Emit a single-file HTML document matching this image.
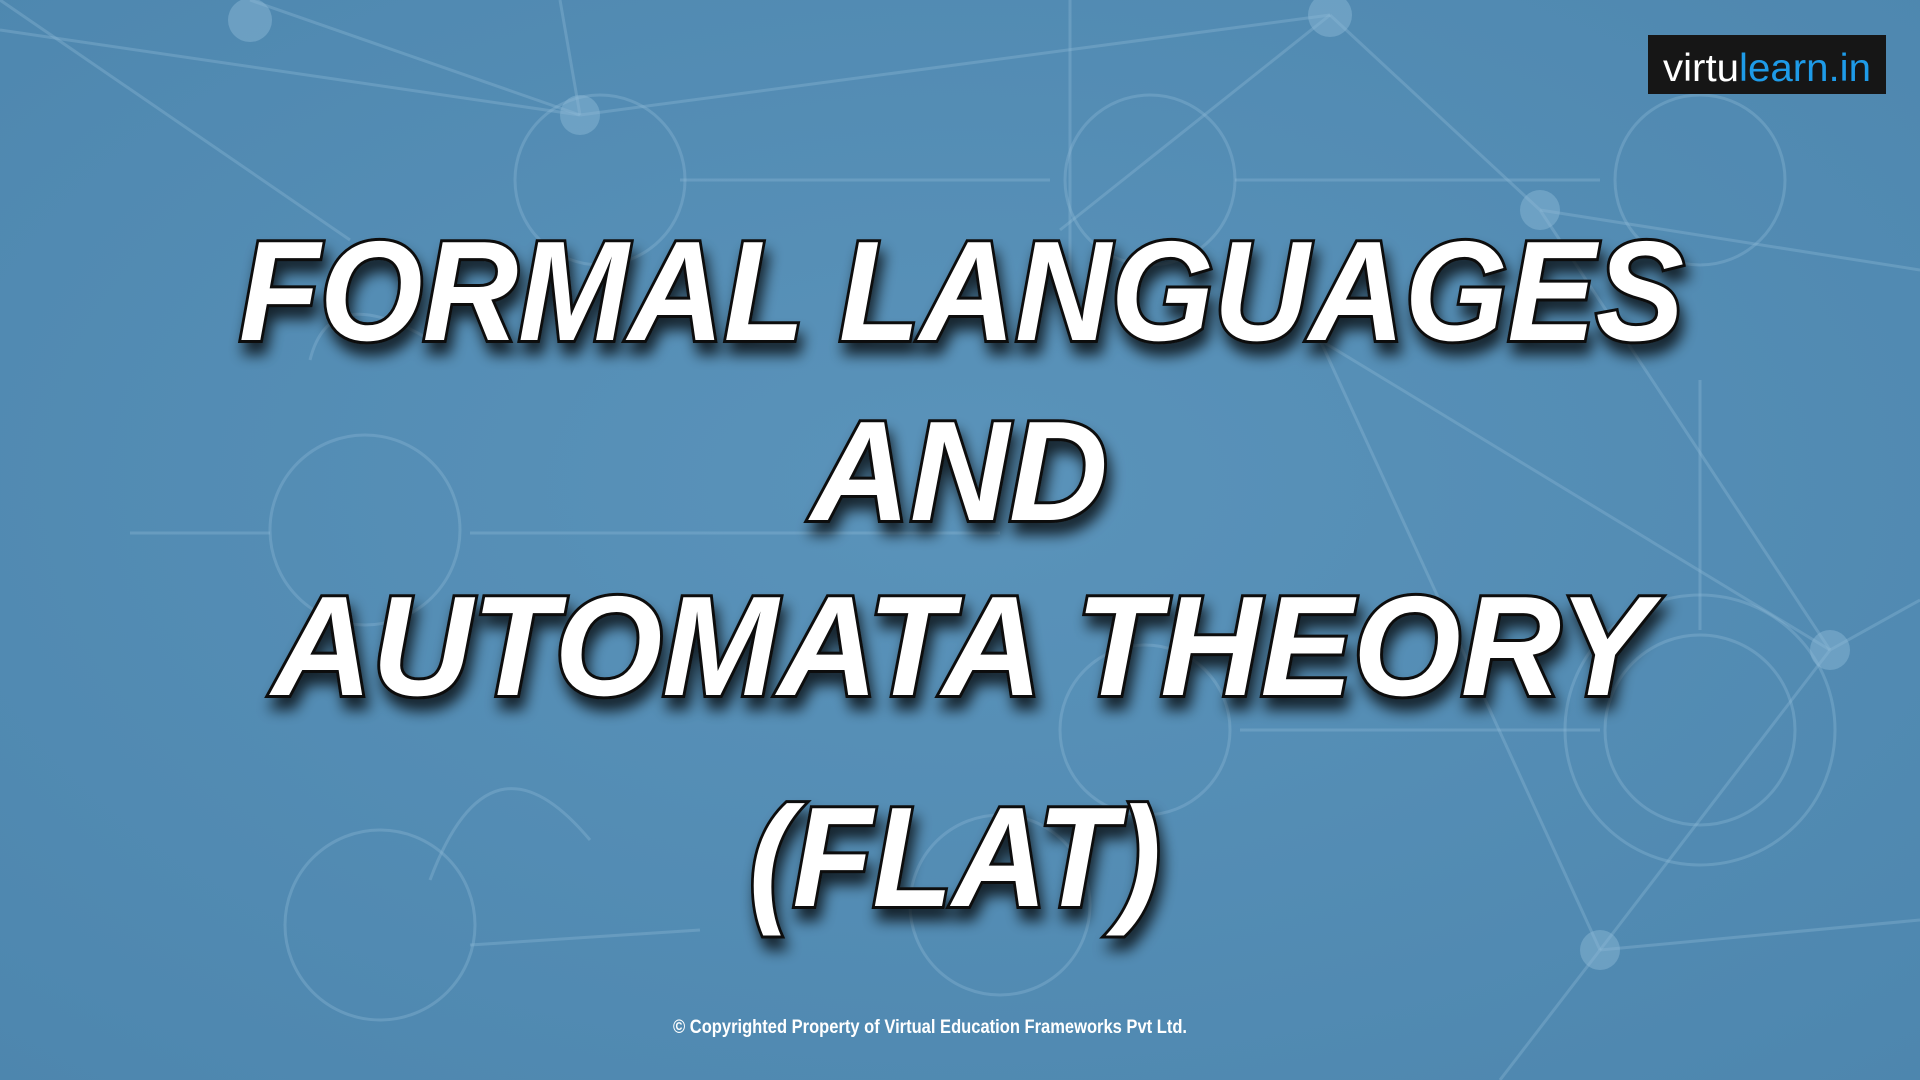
<!DOCTYPE html>
<html><head><meta charset="utf-8"><style>
html,body{margin:0;padding:0;width:1920px;height:1080px;overflow:hidden;background:#5590b6;}
svg{position:absolute;left:0;top:0;}
</style></head><body>
<svg width="1920" height="1080" viewBox="0 0 1920 1080" xmlns="http://www.w3.org/2000/svg">
<defs>
<radialGradient id="bg" cx="50%" cy="45%" r="75%">
<stop offset="0" stop-color="#5a93ba"/><stop offset="1" stop-color="#4d86ae"/>
</radialGradient>
<filter id="sh" x="-10%" y="-30%" width="120%" height="160%">
<feGaussianBlur in="SourceAlpha" stdDeviation="7"/>
<feOffset dx="4" dy="12" result="b"/>
<feComponentTransfer><feFuncA type="linear" slope="0.75"/></feComponentTransfer>
<feMerge><feMergeNode/><feMergeNode in="SourceGraphic"/></feMerge>
</filter>
</defs>
<rect width="1920" height="1080" fill="url(#bg)"/>
<g stroke="#8fbbd8" stroke-opacity="0.35" stroke-width="3" fill="none">
<line x1="0" y1="30" x2="580" y2="115"/><line x1="580" y1="115" x2="1330" y2="15"/>
<line x1="580" y1="115" x2="250" y2="0"/><line x1="580" y1="115" x2="560" y2="0"/>
<line x1="1330" y1="15" x2="1540" y2="210"/><line x1="1540" y1="210" x2="1920" y2="270"/>
<line x1="1540" y1="210" x2="1830" y2="650"/><line x1="1830" y1="650" x2="1920" y2="600"/>
<line x1="1830" y1="650" x2="1600" y2="950"/><line x1="1600" y1="950" x2="1920" y2="920"/>
<line x1="1320" y1="340" x2="1830" y2="650"/><line x1="1320" y1="340" x2="1600" y2="950"/>
<line x1="0" y1="0" x2="350" y2="240"/><line x1="1070" y1="0" x2="1070" y2="300"/>
<line x1="1330" y1="15" x2="1060" y2="230"/><line x1="1600" y1="950" x2="1500" y2="1080"/>
<line x1="1700" y1="380" x2="1700" y2="630"/><line x1="130" y1="533" x2="270" y2="533"/>
<line x1="470" y1="533" x2="1000" y2="533"/><line x1="470" y1="945" x2="700" y2="930"/>
<circle cx="600" cy="180" r="85"/><circle cx="1150" cy="180" r="85"/><circle cx="1700" cy="180" r="85"/>
<circle cx="365" cy="530" r="95"/><circle cx="1700" cy="730" r="95"/><circle cx="1700" cy="730" r="135"/>
<circle cx="380" cy="925" r="95"/><circle cx="1000" cy="905" r="90"/><circle cx="1145" cy="730" r="85"/>
<path d="M430 880 q60 -160 160 -40"/><path d="M310 360 q20 -80 120 -20"/>
<line x1="680" y1="180" x2="1050" y2="180"/><line x1="1235" y1="180" x2="1600" y2="180"/>
<line x1="1240" y1="730" x2="1600" y2="730"/>
</g>
<g fill="#8fbbd8" fill-opacity="0.45">
<circle cx="580" cy="115" r="20"/><circle cx="1330" cy="15" r="22"/><circle cx="1540" cy="210" r="20"/>
<circle cx="1830" cy="650" r="20"/><circle cx="1600" cy="950" r="20"/><circle cx="250" cy="20" r="22"/>
</g>
<g font-family="Liberation Sans, sans-serif" font-weight="bold" font-style="italic" font-size="142" fill="#fff" stroke="#111" stroke-width="6" paint-order="stroke" filter="url(#sh)">
<text x="239" y="340" textLength="1445" lengthAdjust="spacingAndGlyphs">FORMAL LANGUAGES</text>
<text x="811" y="520" textLength="297" lengthAdjust="spacingAndGlyphs">AND</text>
<text x="272" y="695" textLength="1379" lengthAdjust="spacingAndGlyphs">AUTOMATA THEORY</text>
<text x="749" y="906" textLength="412" lengthAdjust="spacingAndGlyphs">(FLAT)</text>
</g>
<text x="673" y="1033" textLength="514" lengthAdjust="spacingAndGlyphs" font-family="Liberation Sans, sans-serif" font-weight="bold" font-size="19" fill="#fff">© Copyrighted Property of Virtual Education Frameworks Pvt Ltd.</text>
<rect x="1648" y="35" width="238" height="59" fill="#161616"/>
<text x="1663" y="81" font-family="Liberation Sans, sans-serif" font-size="39" textLength="208" lengthAdjust="spacingAndGlyphs"><tspan fill="#fff">virtu</tspan><tspan fill="#1e9be8">learn.in</tspan></text>
</svg>
</body></html>
